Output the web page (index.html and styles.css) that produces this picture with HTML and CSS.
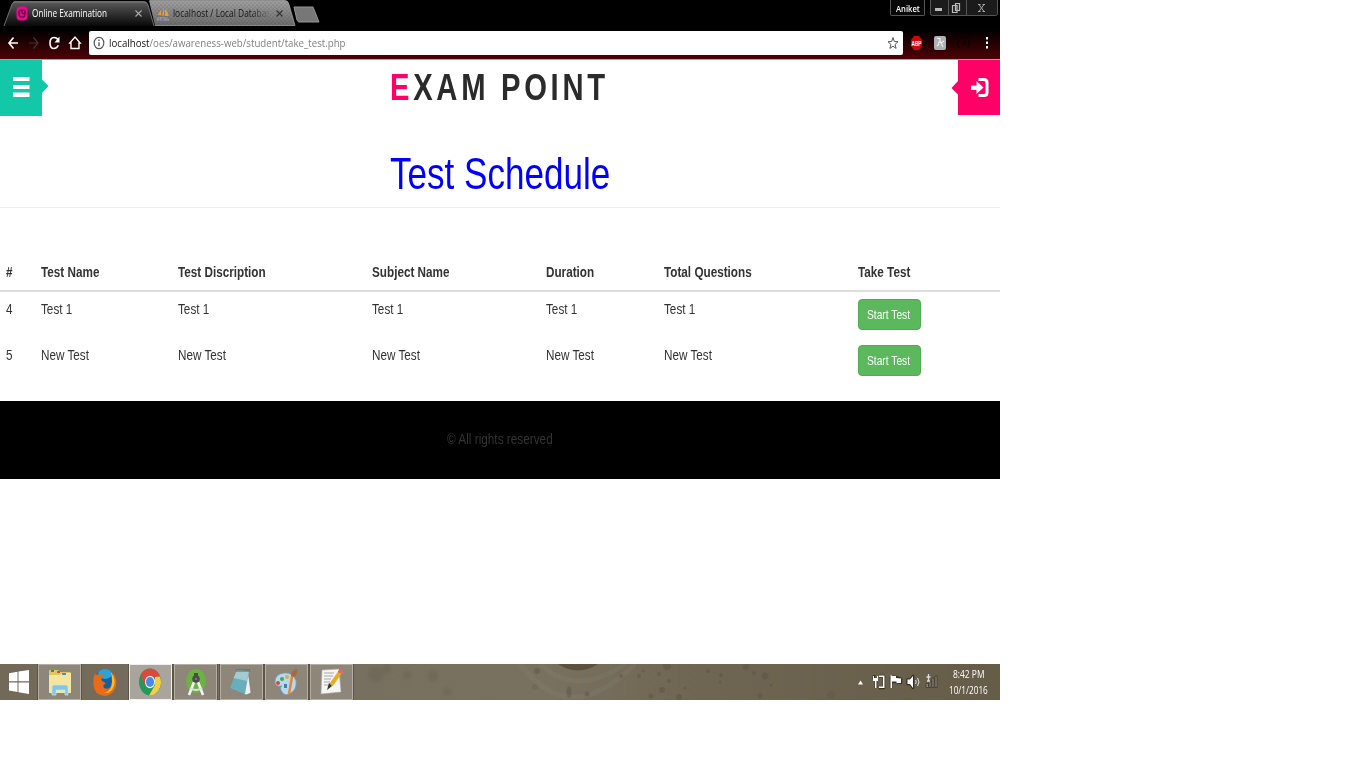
FILE: index.html
```
<!DOCTYPE html>
<html lang="en">
<head>
<meta charset="utf-8">
<title>Online Examination</title>
<link rel="stylesheet" href="styles.css">
</head>
<body>
<div class="screen">
  <header class="browser">
    <div class="tabstrip">
      <svg class="tab-shapes" width="330" height="27" viewBox="0 0 330 27">
        <defs>
          <linearGradient id="active" x1="0" y1="0" x2="0" y2="1"><stop offset="0" stop-color="#5c5c5c"/><stop offset=".45" stop-color="#363636"/><stop offset="1" stop-color="#080808"/></linearGradient>
          <linearGradient id="idle" x1="0" y1="0" x2="0" y2="1"><stop offset="0" stop-color="#a0a0a0"/><stop offset="1" stop-color="#6b6b6b"/></linearGradient>
          <pattern id="weave" width="4" height="4" patternUnits="userSpaceOnUse"><path d="M0 0h2v2H0zM2 2h2v2H2z" fill="#000" opacity=".07"/></pattern>
        </defs>
        <path d="M149 .500h136q3 0 4 4l6 21H155z" fill="url(#idle)"/>
        <path d="M149 .500h136q3 0 4 4l6 21H155z" fill="url(#weave)"/>
        <path d="M150 .500h135q3 0 4 4l6 21H155" fill="none" stroke="#aaa" stroke-width=".700"/>
        <path d="M4 26L12 4q1-3 3-3h129q3 0 4 4l6 21z" fill="url(#active)"/>
        <path d="M4 26L12 4q1-2 3-2h129q3 0 4 3l6 21" fill="none" stroke="#888" stroke-width=".800"/>
        <path d="M294 7h19l6 15h-20q-1 0-2-2z" fill="#777" stroke="#969696"/>
      </svg>
      <div class="tab tab-one">
        <svg class="fav" width="12" height="15" viewBox="0 0 12 15"><rect x=".5" y=".5" width="11" height="14" rx="4" fill="#ed078f"/><path d="M8.500 4H5Q3 4 3 7t1.500 4H7q2 0 2-4V4.500M6 4v3l2 1" fill="none" stroke="#4c0433" stroke-width="1.200"/></svg>
        <span class="tab-title"><span class="t">Online Examination</span></span>
        <svg width="7" height="7" viewBox="0 0 7 7"><path d="M.5.5l6 6m0-6l-6 6" stroke="#aaa" stroke-width="1.100"/></svg>
      </div>
      <div class="tab tab-two">
        <svg class="fav" width="13" height="14" viewBox="0 0 13 14"><path d="M1 8l3-5v5zM5 8.500L7 0v8.500zM8 2q3.500 3 3.500 7H8z" fill="#f39a28"/><text x="0" y="13.5" font-size="6" font-weight="bold" font-family="Liberation Sans" fill="#eee" stroke="#447" stroke-width=".3" textLength="12">PMA</text></svg>
        <span class="tab-title"><span class="t">localhost / Local Databas</span></span>
        <svg width="7" height="7" viewBox="0 0 7 7"><path d="M.5.5l6 6m0-6l-6 6" stroke="#333" stroke-width="1.100"/></svg>
      </div>
      <div class="window-controls">
        <div class="user"><span class="t">Aniket</span></div>
        <svg width="69" height="16" viewBox="0 0 69 16"><rect x=".5" y="-1" width="67" height="16.500" rx="2" fill="#1b1b1b" stroke="#555"/><path d="M18.500 0v15M36.500 0v15" stroke="#555"/><path d="M5 8h7v3H5z" fill="#bbb"/><path d="M25.500 3.500h4v7h-4zM22.500 5.500h4.500v7h-4.500z" fill="#222" stroke="#bbb" stroke-width="1.200"/><path d="M49 4.500l5 7m0-7l-5 7M48 4.500h2.500m2 0H55m-7 7h2.500m2 0H55" stroke="#aaa"/></svg>
      </div>
    </div>
    <div class="toolbar">
      <svg class="nav-icons" width="89" height="32" viewBox="0 0 89 32" fill="none" stroke="#fff" stroke-width="1.600">
        <path d="M18 16H9m4.500-5.500L9 16l4.500 5.500"/><path d="M29 16h9m-4.500-5.500L38 16l-4.500 5.500" stroke="#463236" stroke-width="1.200"/><path d="M58 12.500q-1.500-2-4-2-4 0-4 5.500t4 5.500q3 0 4.300-3.200"/><path d="M59.500 9.500v6H54.500z" fill="#fff" stroke="none"/><path d="M71 16v5.500h8V16h1.200L75 10l-5.200 6z" stroke-width="1.400"/>
      </svg>
      <div class="omnibox">
        <svg width="12" height="14" viewBox="0 0 12 14"><ellipse cx="6" cy="7" rx="4.800" ry="5.700" fill="none" stroke="#555" stroke-width="1.200"/><path d="M6 3.500v1.500M6 6.300v4" stroke="#555" stroke-width="1.400"/></svg>
        <span class="url"><span class="t"><b>localhost</b>/oes/awareness-web/student/take_test.php</span></span>
        <svg width="12" height="14" viewBox="0 0 12 14"><path d="M6 1.500l1.300 4 3.700.2-2.900 2.700 1 4L6 10.200l-3.100 2.200 1-4L1 5.700l3.700-.2z" fill="none" stroke="#555"/></svg>
      </div>
      <svg width="97" height="32" viewBox="0 0 97 32"><path d="M11 9h5l3 4v6l-3 4h-5l-3-4v-6z" fill="#c90808"/><text x="8.500" y="19" fill="#fff" font-size="8" font-weight="bold" font-family="Liberation Sans" textLength="10" lengthAdjust="spacingAndGlyphs">ABP</text><rect x="31" y="9" width="12" height="14" rx="2" fill="#aeb1b3"/><path d="M34 11.500h3v3l-2 2M37 14l3 6M36 17l-2 2M38 16l3-2" fill="none" stroke="#eee" stroke-width="1.100"/><path d="M57 21q-3-1-2-5 1-6 6-6t5 6q0 4-2 5M60 18l3-4" fill="none" stroke="#0d0000" stroke-width="1.500"/><path d="M83 10h2v2.500h-2zm0 4.500h2V17h-2zm0 4.500h2v2.500h-2z" fill="#fff"/></svg>
    </div>
  </header>
  <main class="page">
    <div class="banner">
      <div class="menu"><svg width="49" height="56" viewBox="0 0 49 56"><path d="M0 0h42v19.500l6.500 6.500-6.500 7V56H0z" fill="#12c8a9"/><path d="M13 17h16.500v4H13zm0 8h16.500v4H13zm0 7.500h16.500v4.500H13z" fill="#fff"/></svg></div>
      <h1 class="brand"><span class="t"><em>E</em>XAM POINT</span></h1>
      <svg width="49" height="56" viewBox="0 0 49 56"><path d="M7 0h42v55H7V34.500L.500 28 7 21z" fill="#f06"/><path d="M20 25.500h5.500v-4.500l7 6.500-7 6.500v-4H20z" fill="#fff"/><path d="M27.500 19.500H33q3 0 3 3v10q0 3-3 3h-5.500" fill="none" stroke="#fff" stroke-width="3"/></svg>
    </div>
    <h2 class="title"><span class="t">Test Schedule</span></h2>
    <div class="table">
      <div class="row head"><div><span class="t">#</span></div><div><span class="t">Test Name</span></div><div><span class="t">Test Discription</span></div><div><span class="t">Subject Name</span></div><div><span class="t">Duration</span></div><div><span class="t">Total Questions</span></div><div><span class="t">Take Test</span></div></div>
      <div class="row"><div><span class="t">4</span></div><div><span class="t">Test 1</span></div><div><span class="t">Test 1</span></div><div><span class="t">Test 1</span></div><div><span class="t">Test 1</span></div><div><span class="t">Test 1</span></div><div><a class="btn"><span class="t">Start Test</span></a></div></div>
      <div class="row"><div><span class="t">5</span></div><div><span class="t">New Test</span></div><div><span class="t">New Test</span></div><div><span class="t">New Test</span></div><div><span class="t">New Test</span></div><div><span class="t">New Test</span></div><div><a class="btn"><span class="t">Start Test</span></a></div></div>
    </div>
    <footer class="foot"><span class="t">© All rights reserved</span></footer>
  </main>
  <div class="taskbar">
    <svg class="drops" width="1000" height="36" viewBox="0 0 1000 36">
      <path d="M540 0q35 34 85 0M520 0q50 66 115 0" fill="none" stroke="#91897a" stroke-width="5" opacity=".18"/>
      <path d="M558 0q20 13 40 0z" fill="#5b523e"/>
      <g fill="#5a5342" opacity=".45"><circle cx="537" cy="7" r="3"/><circle cx="535" cy="23" r="3" opacity=".5"/><ellipse cx="569" cy="28" rx="2.500" ry="6"/><circle cx="587" cy="30" r="2.500"/><circle cx="621" cy="12" r="2"/><circle cx="639" cy="12" r="2"/><circle cx="643" cy="7" r="1.500"/><circle cx="667" cy="2" r="4"/><circle cx="659" cy="10" r="2"/><circle cx="669" cy="17" r="2"/><circle cx="662" cy="26" r="3"/><circle cx="651" cy="32" r="2.500"/><circle cx="685" cy="24" r="1.500"/><circle cx="679" cy="33" r="3"/><circle cx="708" cy="7" r="2"/><circle cx="721" cy="11" r="2"/><circle cx="720" cy="18" r="1.500"/><circle cx="746" cy="3" r="3"/><circle cx="754" cy="9" r="2"/><circle cx="765" cy="12" r="3.500"/><circle cx="771" cy="21" r="1.500"/><circle cx="760" cy="32" r="2.500"/><circle cx="831" cy="31" r="4" opacity=".6"/></g>
      <g class="faint" fill="#5a5342" opacity=".22"><circle cx="386" cy="5" r="5"/><circle cx="407" cy="11" r="4"/><ellipse cx="433" cy="12" rx="5" ry="6"/><circle cx="447" cy="28" r="4"/><circle cx="376" cy="10" r="8"/></g>
    </svg>
    <div class="start"><svg width="20" height="24" viewBox="0 0 20 24"><path d="M0 3.200l8.500-1.500v9.600H0zm9.500-1.700L20 0v11.300H9.500zM0 12.400h8.500V22L0 20.500zm9.500 0H20V24L9.500 22.300z" fill="#fff"/></svg></div>
    <div class="task open">
      <svg width="24" height="28" viewBox="0 0 24 28"><path d="M1 3q0-1 1-1h8l2 2h10q1 0 1 2v19H1z" fill="#e0c765"/><path d="M1 7h11l2-2h9v20H1z" fill="#f5e69d"/><path d="M3 2h3v2H3z" fill="#19a24a"/><path d="M9 3h3v2H9z" fill="#e34c31"/><path d="M14 5h4v2h-4z" fill="#3c91d2"/><path d="M4 27V19q0-2 2-2h12q2 0 2 2v8h-3v-5H8v5z" fill="#7fc7e6" stroke="#c4eafa" stroke-width=".700"/></svg>
    </div>
    <div class="task">
      <svg width="24" height="28" viewBox="0 0 24 28"><ellipse cx="12" cy="13.500" rx="10" ry="12.500" fill="#155f9f"/><ellipse cx="12" cy="6" rx="7" ry="5" fill="#29a3d8"/><path d="M2 6q2 1 4 1 3-2 5 0-4 3-2 6 3 1 4 3-4 0-2 4 7 3 8-6 2-5 0-10 7 8 3 17-4 7-10 7Q1 27 .500 17 0 9 2 6z" fill="#e76b19"/><path d="M18 4q5 7 3 14-3 8-10 7 8-2 8-11 0-5-1-10z" fill="#f6bd35"/></svg>
    </div>
    <div class="task open current">
      <svg width="22" height="28" viewBox="0 0 22 28"><ellipse cx="11" cy="14" rx="11" ry="13.500" fill="#26985a"/><path d="M1.500 7Q5 .500 11 .500T20.500 7L21 9H11L6 17z" fill="#d94a3c"/><path d="M20.700 8.500Q24 16 19 23q-4 5-9 4.500L16 17V9z" fill="#f6cd45"/><ellipse cx="11" cy="14" rx="5" ry="6.200" fill="#f3f3ef"/><ellipse cx="11" cy="14" rx="4" ry="5" fill="#4689ed"/></svg>
    </div>
    <div class="task open">
      <svg width="22" height="28" viewBox="0 0 22 28"><ellipse cx="11" cy="13" rx="10" ry="12" fill="#6cb344"/><path d="M9 14L4 27m9-13l5 13" stroke="#f3f3f3" stroke-width="2.600"/><path d="M5 20q6 4 12 0" fill="none" stroke="#ddd" stroke-width="2"/><circle cx="11" cy="11" r="2.500" fill="#777" stroke="#4c4c4c" stroke-width="2.500"/><path d="M9 5h4v4H9z" fill="#4c4c4c"/></svg>
    </div>
    <div class="task open">
      <svg width="24" height="28" viewBox="0 0 24 28"><path d="M19 3l3 22-5 2-5-3z" fill="#edf0ec" stroke="#777" stroke-width=".600"/><path d="M8 2l12 1-4 23-15-6z" fill="#69aebd"/><path d="M8 2l12 1-2 10L4.500 10z" fill="#a2cad0"/><path d="M8 1v3m2-3v3m2-3v3m2-3v3m2-3v3m2-3v3m2-3v3" stroke="#5a6464"/></svg>
    </div>
    <div class="task open">
      <svg width="24" height="28" viewBox="0 0 24 28"><path d="M1 14Q1 6 10 5t12 8q1 8-5 12t-9-1 0-6q-7 1-7-4z" fill="#b6d9ef" stroke="#6f9eba" stroke-width=".700"/><circle cx="8" cy="11" r="2" fill="#43ac4b"/><circle cx="13" cy="9" r="2" fill="#eba939"/><circle cx="4" cy="15" r="2" fill="#d94640"/><path d="M10 16h3v4h-3z" fill="#487fa6"/><path d="M18.500 6L15 26" stroke="#e98531" stroke-width="2.500"/><path d="M17 8q0-6 6-7 2 4-3 8z" fill="#a36b40"/></svg>
    </div>
    <div class="task open">
      <svg width="24" height="28" viewBox="0 0 24 28"><path d="M2 2l17-1 2 23-20 2z" fill="#f5f5f3" stroke="#aaa" stroke-width=".600"/><path d="M4 5h10M4 8h9M4 11h7M4 14h6M4 17h6" stroke="#a7a7a7"/><path d="M21 3L11 17" stroke="#eaac22" stroke-width="4"/><path d="M19.500 5l2-3.500" stroke="#df667a" stroke-width="4"/><path d="M9 15l3 3-5 4z" fill="#333"/></svg>
    </div>
    <div class="tray">
      <svg width="90" height="20" viewBox="0 0 90 20"><path d="M6.500 8.500L9 12.500H4z" fill="#fff"/><g fill="none" stroke="#383126" stroke-width="2.600" stroke-linejoin="round"><path d="M20 3v4h2v9M25 4h5v12h-5M37 4v12M38 5h4l5 2v4l-5-1h-4M53.500 7.500H56L59 4v12l-3-4h-2.500z"/></g><g fill="#fff"><path d="M19 4h1v2h3V4h1v5h-1.500v7H21V9h-2z"/><path d="M25 3.500h5.500v12.500H25v-1.500h4V5h-4zM36.500 3.500H38v12.500h-1.500z"/><path d="M38 4h4v2l5 .5V11h-4.500V9.500H38zM53.500 7.500H56L59 4v12l-3-4h-2.500z"/></g><path d="M61.500 8q1.500 2 0 4m2-6q3 4 0 8" fill="none" stroke="#eee" stroke-width=".900"/><path d="M72 15.500v-4h2.500v4zm3 0V9h2v6.500zm3 0V6h2v9.500zm3 0V4h2v11.500z" fill="#8c867a" stroke="#393328" stroke-width=".700"/><path d="M74.500 2v7M72.500 5h4M73 9h3" fill="none" stroke="#ddd" stroke-width="1.300"/></svg>
      <div class="clock"><div class="time"><span class="t">8:42 PM</span></div><div class="date"><span class="t">10/1/2016</span></div></div>
    </div>
  </div>
</div>
</body>
</html>
```
FILE: styles.css
```
* { box-sizing: border-box; }
body { margin: 0; background: #fff; color: #333; font-family: "Liberation Sans", Arial, sans-serif; overflow: hidden; }
svg { display: block; flex: none; }
.screen { width: 1000px; height: 700px; display: flex; flex-direction: column; overflow: hidden; }
.t { display: inline-block; white-space: nowrap; transform: scaleX(.803); transform-origin: 0 50%; }

.browser { height: 60px; flex: none; background: linear-gradient(#000 0, #000 30px, #4b0206 58px); border-bottom: 1px solid #aaa1a2; font-family: "Open Sans", "Noto Sans", sans-serif; }
.tabstrip { height: 27px; display: flex; position: relative; }
.tab-shapes { position: absolute; left: 0; top: 0; }
.tab { display: flex; align-items: center; height: 27px; position: relative; font-size: 10px; }
.tab-one { width: 142px; padding-left: 16px; color: #fff; }
.tab-two { width: 142px; padding-left: 15px; color: #161616; }
.fav { margin-right: 4px; }
.tab-title { width: 103px; overflow: hidden; line-height: 16px; padding-bottom: 1px; }
.tab-one .t { transform: scaleX(.82); }
.tab-two .tab-title { width: 98px; margin-right: 5px; margin-left: -1px; -webkit-mask-image: linear-gradient(90deg, #000 80%, transparent); mask-image: linear-gradient(90deg, #000 80%, transparent); }
.tab-two .t { transform: scaleX(.84); }
.window-controls { margin-left: auto; display: flex; gap: 5px; padding-right: 1px; }
.user { width: 35px; height: 16px; border: 1px solid #555; border-top: 0; border-radius: 0 0 2px 2px; background: #080808; color: #fff; font-size: 9.5px; font-weight: 600; line-height: 17px; padding-left: 5px; }
.toolbar { height: 32px; display: flex; }
.omnibox { width: 814px; height: 24px; margin-top: 4px; background: #fff; border-radius: 2px; display: flex; align-items: center; padding: 0 4px; color: #808080; font-size: 11.5px; }
.url { flex: 1; padding-left: 4px; line-height: 24px; }
.url b { font-weight: 400; color: #111; }
.url .t { transform: scaleX(.842); }

.page { height: 604px; flex: none; }
.banner { height: 56px; display: flex; justify-content: space-between; }
.brand { margin: 0; width: 220px; font-size: 36.4px; line-height: 55px; letter-spacing: 4.6px; color: #2b2b2b; }
.brand em { font-style: normal; color: #f06; }
.title { margin: 0; height: 92px; padding: 33px 0 0 390px; border-bottom: 1px solid #eee; font-size: 43.7px; line-height: 50px; font-weight: 400; color: #00f; }
.table { padding-top: 44px; height: 193px; font-size: 14.6px; }
.row { display: grid; grid-template-columns: 35px 137px 194px 174px 117.500px 194.500px 1fr; padding: 7px 0 0 6px; height: 45.500px; line-height: 20px; }
.row.head { height: 40px; padding-top: 10px; border-bottom: 2px solid #ddd; line-height: 21px; font-weight: 700; }
.btn { display: block; width: 63px; height: 31px; border: 1px solid #4cae4c; border-radius: 4px; background: #5cb85c; color: #fff; font-size: 12.75px; line-height: 29px; padding-left: 8px; }
.foot { height: 78px; background: #000; color: #333; font-size: 14.7px; line-height: 77px; padding-left: 447px; }

.taskbar { height: 36px; flex: none; display: flex; position: relative; overflow: hidden; background: linear-gradient(90deg, #726959, #777060 35%, #79715f 55%, #6e6552 70%, #665d49); }
.drops { position: absolute; left: 0; top: 0; }
.faint { filter: blur(1.5px); }
.start { width: 38px; padding: 6px 0 0 9px; }
.task { width: 43px; height: 36px; margin-right: 2.400px; display: flex; justify-content: center; align-items: center; position: relative; }
.open { background: #8d8679; border: 1px solid #b4aea4; box-shadow: 0 0 0 1px #5d5546; }
.current { background: #aaa59c; border-color: #eee; }
.tray { margin-left: auto; width: 146px; display: flex; padding-top: 8px; position: relative; color: #fff; }
.clock { margin-top: -6px; font: 10.5px/16px "Open Sans", "Noto Sans", sans-serif; }
.time { padding-left: 9px; }
.date { padding-left: 5px; }
.date .t { transform: scaleX(.78); }
```
